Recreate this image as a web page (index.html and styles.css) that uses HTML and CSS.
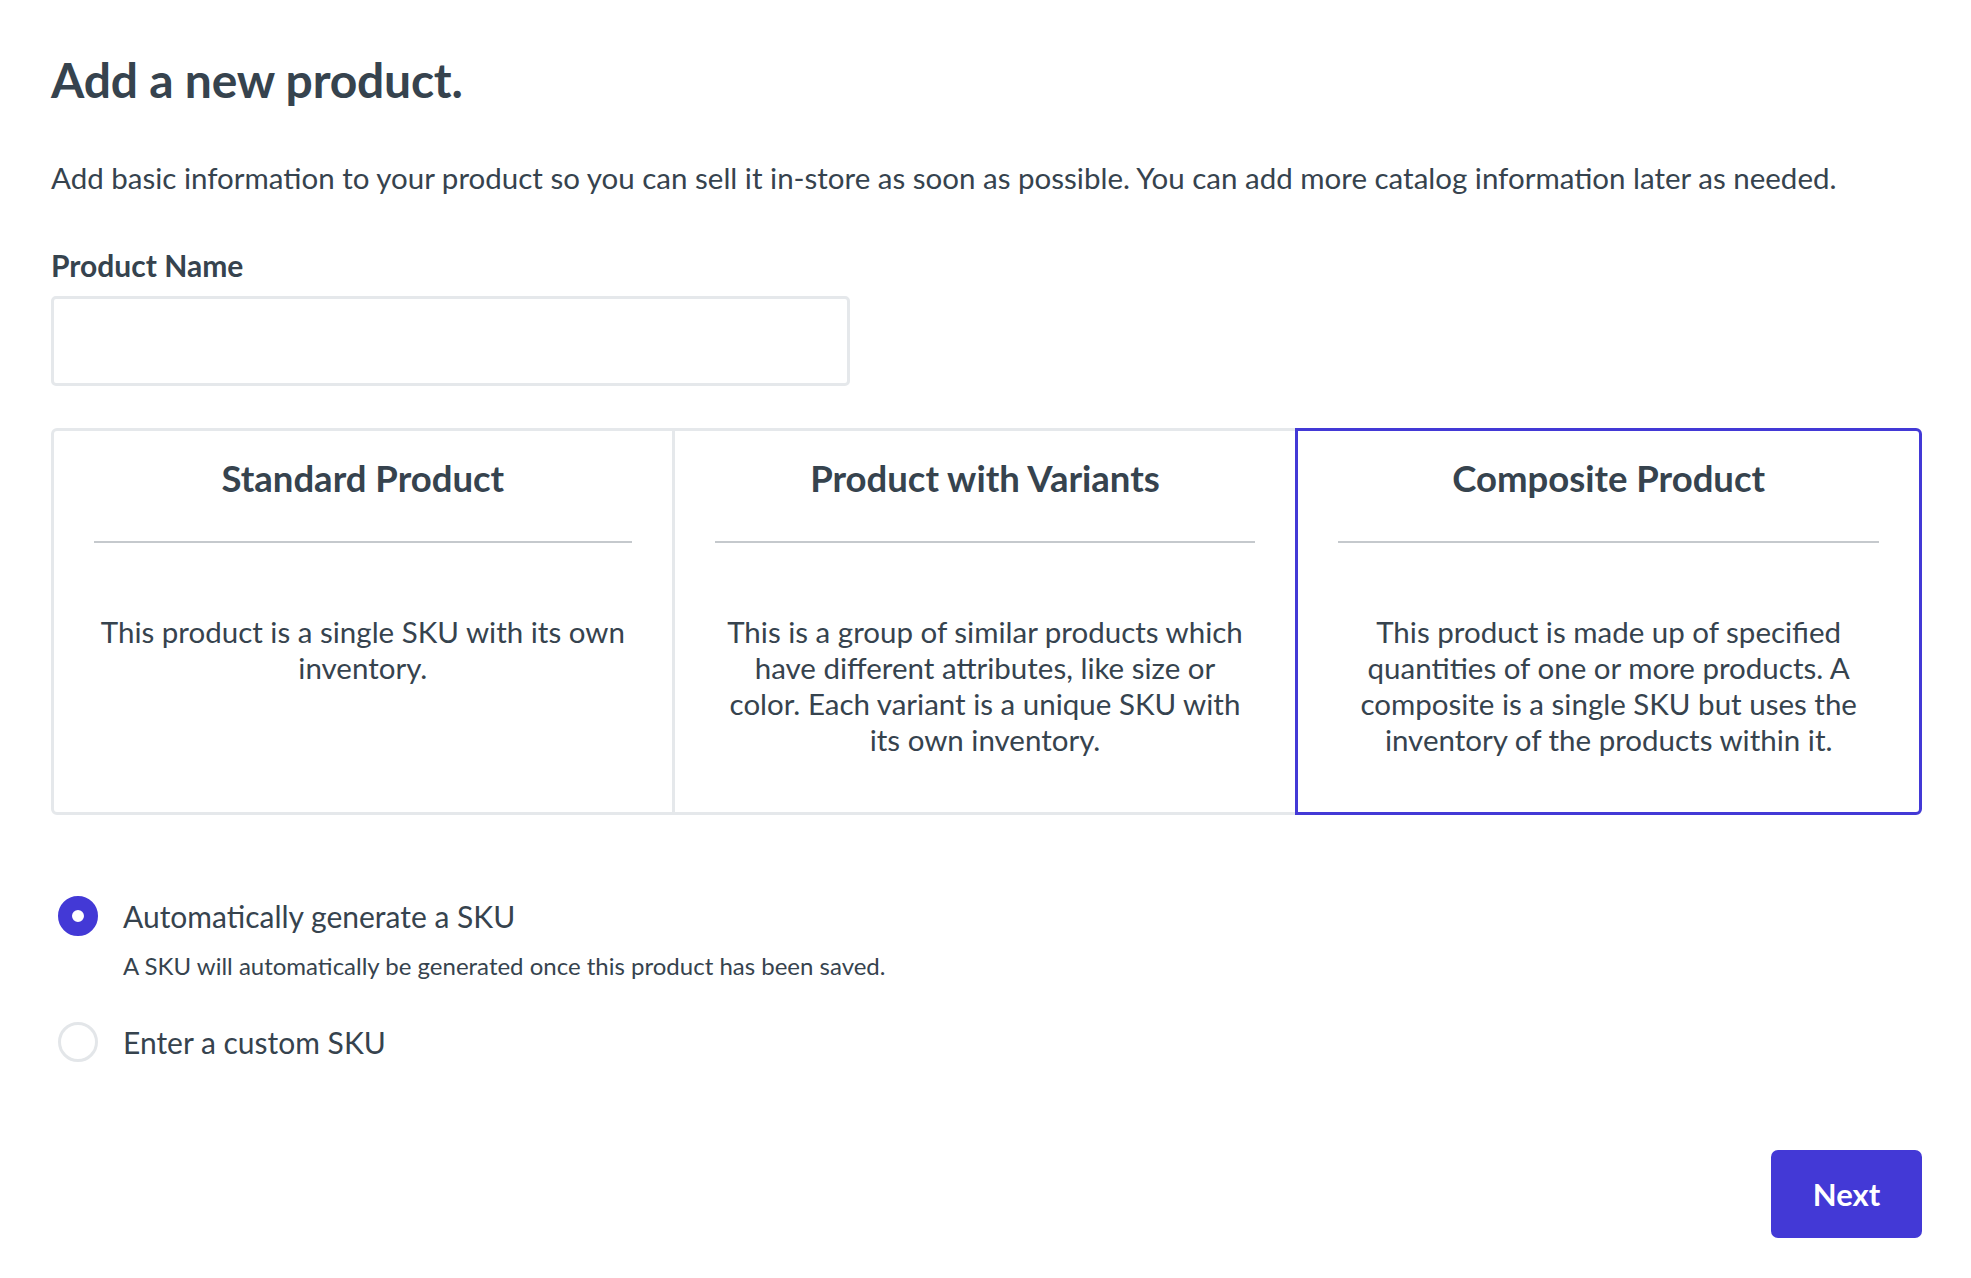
FILE: index.html
```html
<!DOCTYPE html>
<html lang="en">
<head>
<meta charset="utf-8">
<title>Add a new product</title>
<link rel="stylesheet" href="styles.css">
</head>
<body>
<main class="page">
  <h1 class="title">Add a new product.</h1>
  <p class="intro">Add basic information to your product so you can sell it in-store as soon as possible. You can add more catalog information later as needed.</p>

  <label class="field-label" for="product-name">Product Name</label>
  <input class="text-input" id="product-name" type="text">

  <div class="types">
    <div class="type-card type-first">
      <h2 class="type-title">Standard Product</h2>
      <hr class="type-rule">
      <p class="type-desc">This product is a single SKU with its own inventory.</p>
    </div>
    <div class="type-card">
      <h2 class="type-title">Product with Variants</h2>
      <hr class="type-rule">
      <p class="type-desc">This is a group of similar products which have different attributes, like size or color. Each variant is a unique SKU with its own inventory.</p>
    </div>
    <div class="type-card type-last is-selected">
      <h2 class="type-title">Composite Product</h2>
      <hr class="type-rule">
      <p class="type-desc">This product is made up of specified quantities of one or more products. A composite is a single SKU but uses the inventory of the products within it.</p>
    </div>
  </div>

  <div class="sku-options">
    <div class="radio-row">
      <span class="radio is-checked"></span>
      <span class="radio-label">Automatically generate a SKU</span>
    </div>
    <p class="radio-help">A SKU will automatically be generated once this product has been saved.</p>
    <div class="radio-row radio-row-second">
      <span class="radio"></span>
      <span class="radio-label">Enter a custom SKU</span>
    </div>
  </div>

  <div class="actions">
    <button class="btn-primary" type="button">Next</button>
  </div>
</main>
</body>
</html>
```

FILE: styles.css
```css
* { box-sizing: border-box; }

html, body {
  margin: 0;
  padding: 0;
  background: #ffffff;
}

body {
  font-family: Lato, "Open Sans", "Liberation Sans", sans-serif;
  color: #36434e;
}

.page {
  padding: 52px 49px 0 51px;
}

.title {
  margin: 0;
  font-size: 48px;
  line-height: 56px;
  font-weight: 700;
  letter-spacing: -0.2px;
}

.intro {
  margin: 53px 0 0;
  font-size: 29.5px;
  line-height: 34px;
  font-weight: 400;
}

.field-label {
  display: block;
  margin-top: 52px;
  font-size: 30px;
  line-height: 36px;
  font-weight: 700;
}

.text-input {
  display: block;
  margin-top: 13px;
  width: 799px;
  height: 90px;
  border: 3px solid #e5e8eb;
  border-radius: 5px;
  background: #fff;
  font: inherit;
  font-size: 28px;
  padding: 0 16px;
  outline: none;
}

.types {
  margin-top: 42px;
  display: grid;
  grid-template-columns: repeat(3, 1fr);
}

.type-card {
  position: relative;
  min-height: 387px;
  border: 3px solid #e5e8eb;
  padding: 24.5px 40px 30px;
  text-align: center;
  background: #fff;
}

.type-card + .type-card {
  margin-left: -3px;
}

.type-first {
  border-radius: 6px 0 0 6px;
}

.type-last {
  border-radius: 0 6px 6px 0;
}

.type-card.is-selected {
  border-color: #4339d6;
  z-index: 1;
}

.type-title {
  margin: 0;
  font-size: 36.5px;
  line-height: 44px;
  font-weight: 700;
}

.type-rule {
  margin: 41.75px 0 0;
  border: 0;
  height: 2px;
  background: #c5c9cd;
}

.type-desc {
  margin: 70.75px 0 0;
  padding: 0 5px;
  font-size: 29.5px;
  line-height: 36px;
}

.sku-options {
  margin-top: 81px;
  padding-left: 7px;
}

.radio-row {
  display: flex;
  align-items: center;
  gap: 25px;
  height: 40px;
}

.radio-row-second {
  margin-top: 42px;
}

.radio {
  flex: none;
  width: 40px;
  height: 40px;
  border-radius: 50%;
  border: 3px solid #e3e6e9;
  background: #fff;
}

.radio.is-checked {
  border: 14.5px solid #4339d6;
}

.radio-label {
  font-size: 30px;
  line-height: 40px;
}

.radio-help {
  margin: 16px 0 0 65px;
  font-size: 24px;
  line-height: 28px;
}

.actions {
  display: flex;
  justify-content: flex-end;
  margin-top: 87.5px;
}

.btn-primary {
  width: 151px;
  height: 88px;
  border: 0;
  border-radius: 7px;
  background: #4339d6;
  color: #fff;
  font-family: inherit;
  font-size: 31px;
  font-weight: 700;
  cursor: pointer;
}
```
